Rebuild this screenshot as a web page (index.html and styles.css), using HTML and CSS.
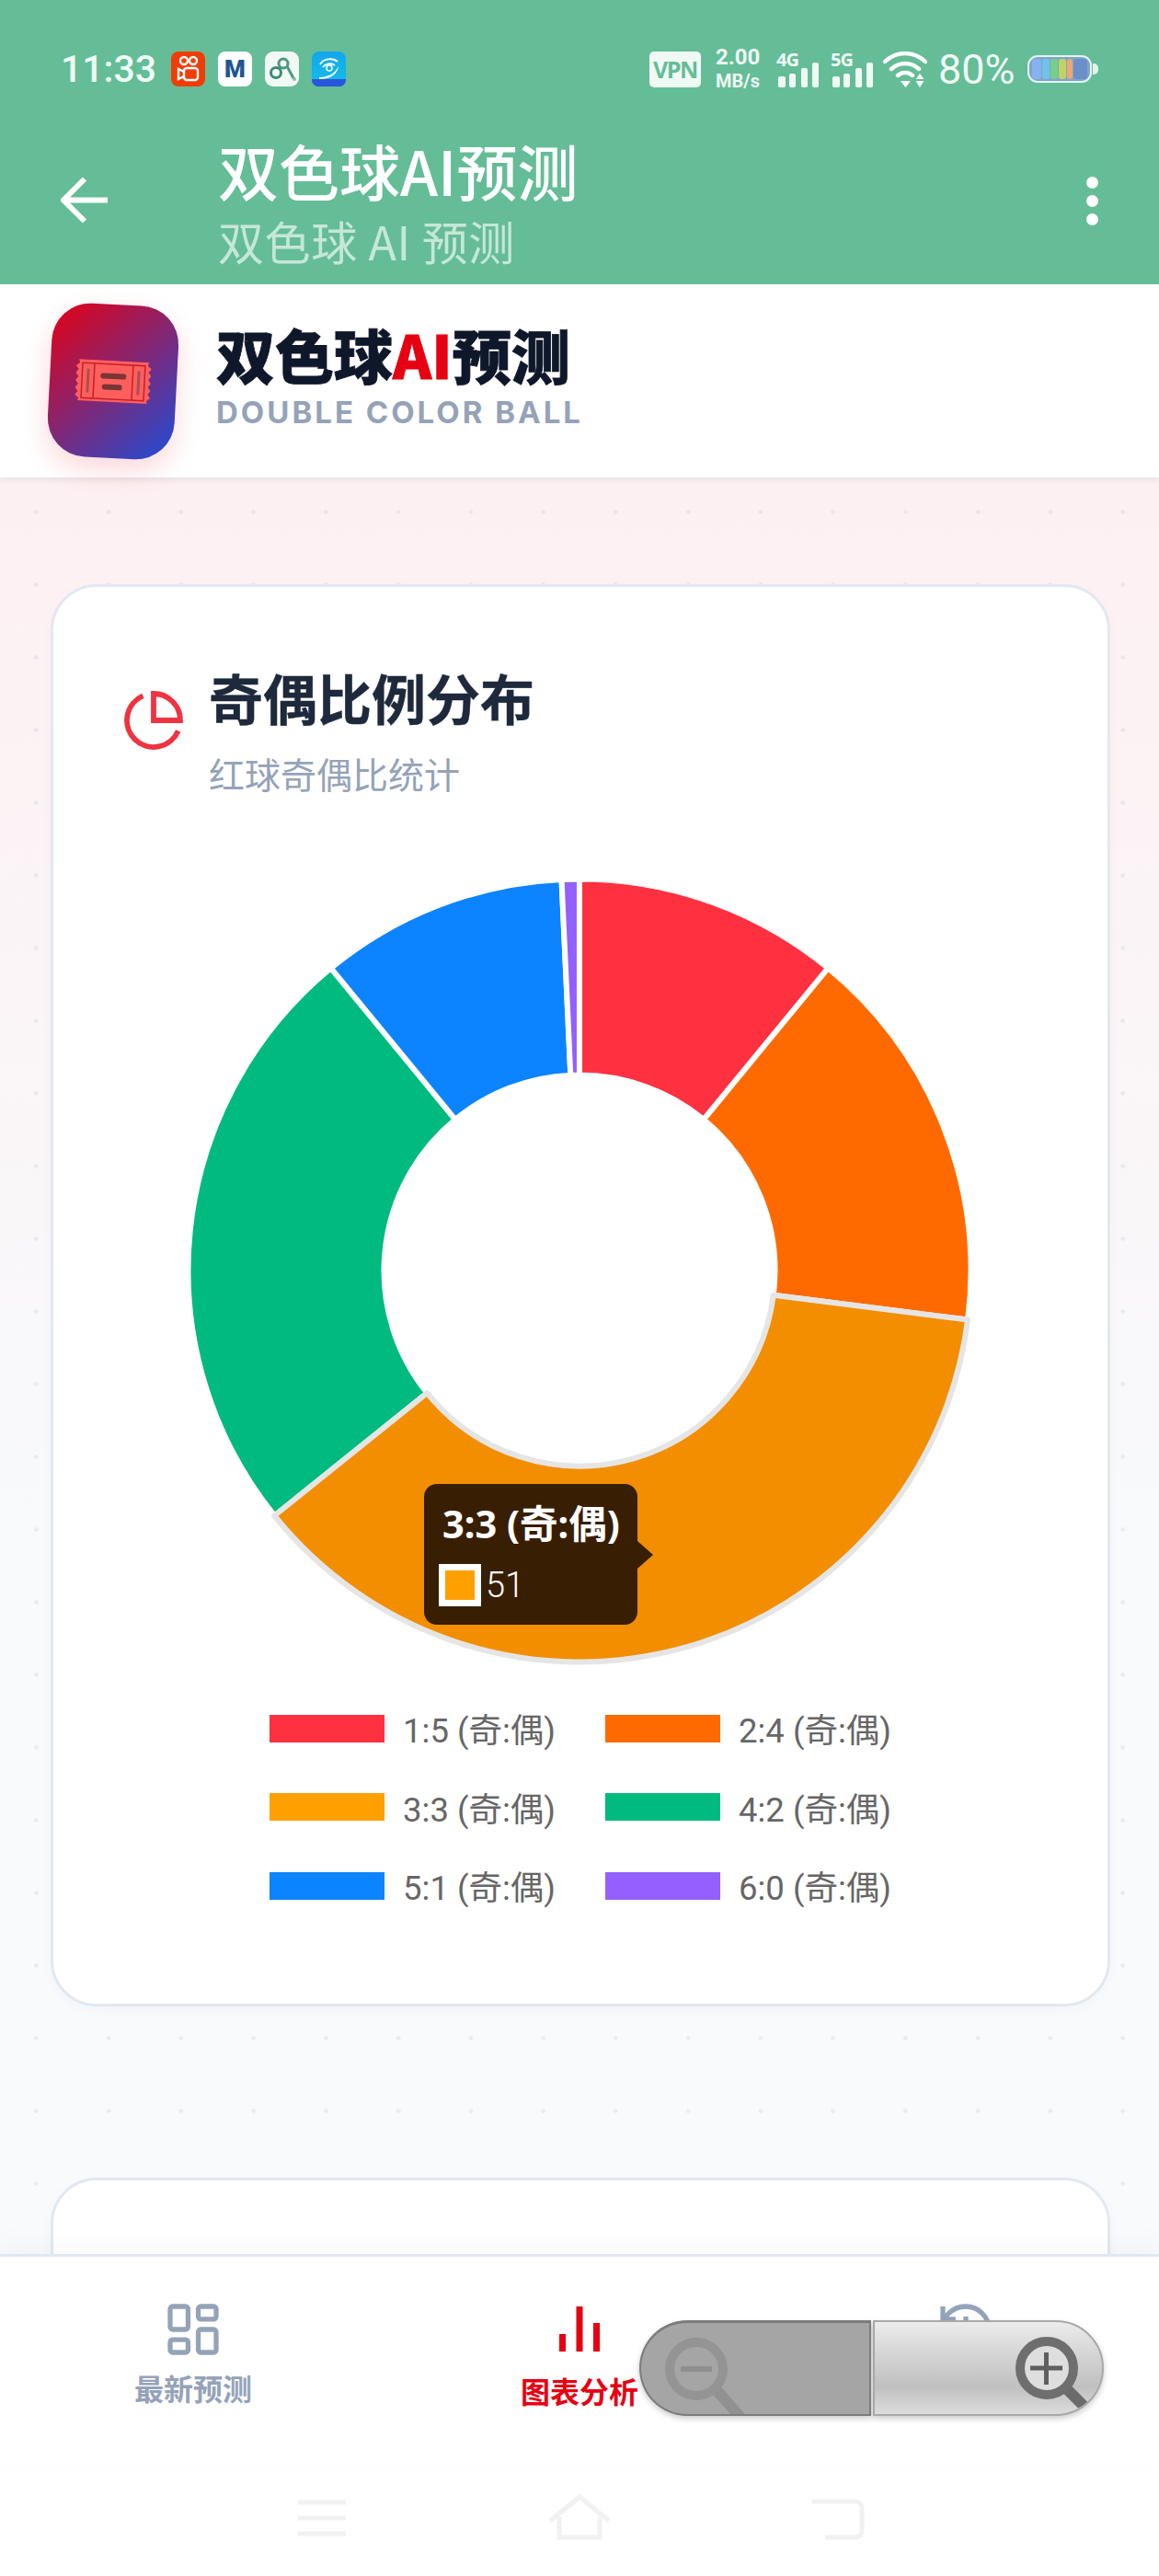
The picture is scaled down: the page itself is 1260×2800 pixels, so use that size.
FILE: index.html
```html
<!DOCTYPE html>
<html lang="zh-CN">
<head>
  <meta charset="UTF-8" />
  <meta name="viewport" content="width=device-width, initial-scale=1.0">
  <title>双色球AI预测</title>
  <link rel="stylesheet" href="styles.css">
</head>
<body>
  <div class="top-green">
    <div class="status-bar">
      <div class="status-left">
        <span class="clock">11:33</span>
        <svg class="app-icon" viewBox="0 0 37 38"><rect width="37" height="38" rx="8" fill="#f23c05"/><circle cx="14" cy="10" r="4" fill="none" stroke="#fff" stroke-width="2.4"/><circle cx="24" cy="10" r="4" fill="none" stroke="#fff" stroke-width="2.4"/><rect x="14" y="18" width="15" height="13" rx="3" fill="none" stroke="#fff" stroke-width="2.4"/><path d="M14 22l-6-3v11l6-3" fill="none" stroke="#fff" stroke-width="2.4"/></svg>
        <span class="app-tile"><span class="app-m">M</span></span>
        <svg class="app-icon" viewBox="0 0 37 38"><rect width="37" height="38" rx="9" fill="#f2f8f4"/><circle cx="20" cy="13" r="5" fill="none" stroke="#4c9a82" stroke-width="3"/><circle cx="12" cy="23" r="5.5" fill="none" stroke="#3f8a78" stroke-width="3"/><path d="M24 16l7 13" stroke="#4c9a82" stroke-width="3"/><circle cx="32" cy="30" r="2" fill="#8fb8a8"/></svg>
        <svg class="app-icon" viewBox="0 0 37 38"><defs><linearGradient id="blueApp" x1="0" y1="0" x2="0" y2="1"><stop offset="0" stop-color="#13a6ee"/><stop offset="1" stop-color="#12c0e6"/></linearGradient></defs><rect width="37" height="38" rx="8" fill="url(#blueApp)"/><path d="M0 30h37v1a7 7 0 0 1-7 7H7a7 7 0 0 1-7-7z" fill="#2a56dc"/><path d="M9 14c3-6 14-8 19-3M12 17c3-4 9-5 13-2" fill="none" stroke="#fff" stroke-width="2"/><path d="M8 28c7 0 16-2 21-12-1 8-8 14-21 14z" fill="#fff"/><circle cx="19" cy="18" r="3" fill="none" stroke="#fff" stroke-width="1.6"/></svg>
      </div>
      <div class="status-right">
        <span class="vpn">VPN</span>
        <span class="speed"><span>2.00</span><span>MB/s</span></span>
        <svg class="signal" viewBox="0 -8 46 47"><text x="0" y="16">4G</text><rect x="2" y="27" width="8" height="12" rx="2"/><rect x="14" y="24" width="7" height="15" rx="2"/><rect x="27" y="18" width="7" height="21" rx="2"/><rect x="39" y="12" width="7" height="27" rx="2"/></svg>
        <svg class="signal" viewBox="0 -8 46 47"><text x="0" y="16">5G</text><rect x="2" y="27" width="8" height="12" rx="2"/><rect x="14" y="24" width="7" height="15" rx="2"/><rect x="27" y="18" width="7" height="21" rx="2"/><rect x="39" y="12" width="7" height="27" rx="2"/></svg>
        <svg class="wifi" viewBox="0 0 48 39"><path d="M2 11c13-12 31-12 44 0M9 19c9-8 21-8 30 0M16 26c5-4 11-4 16 0" fill="none" stroke="#fff" stroke-width="4.4" stroke-linecap="round"/><path d="M19 32h11l-5.500 7zM40 24l4.500 6h-9zM35.500 32h9l-4.500 7z" fill="#fff"/></svg>
        <span class="battery-pct">80%</span>
        <span class="battery">
          <span class="cell cell-a"></span><span class="cell cell-b"></span><span class="cell cell-c"></span><span class="cell cell-d"></span><span class="cell cell-e"></span><span class="cell cell-f"></span>
        </span>
      </div>
    </div>
    <div class="app-bar">
      <svg class="back" viewBox="0 0 53 51"><path d="M51 25.500H5M26 2.500L3 25.500l23 23" fill="none" stroke="#fff" stroke-width="6"/></svg>
      <div class="app-titles">
        <div class="app-title">双色球AI预测</div>
        <div class="app-sub">双色球 AI 预测</div>
      </div>
      <div class="more"><span></span><span></span><span></span></div>
    </div>
  </div>

  <header class="brand">
    <div class="logo">
      <svg class="ticket" viewBox="0 0 82 46">
        <path d="M3 0H79L78 4l4 3-3 4 3 4-3 4 3 4-3 4 3 4-3 4 3 4-4 3 1 3H3l1-3-4-3 3-4-3-4 3-4-3-4 3-4-3-4 3-4-3-4 4-3z" fill="#ff5f5c"/>
        <rect x="7" y="4" width="68" height="38" fill="none" stroke="#c4202c" stroke-width="1.5"/>
        <path d="M20 4v38M62 4v38" stroke="#c4202c" stroke-width="1.5"/>
        <rect x="12" y="10" width="3" height="26" fill="#a85050"/>
        <rect x="67" y="10" width="3" height="26" fill="#a85050"/>
        <rect x="27" y="14" width="28" height="6" rx="3" fill="#7a3535"/>
        <rect x="29" y="26" width="22" height="6" rx="3" fill="#7a3535"/>
      </svg>
    </div>
    <div class="brand-text">
      <h1>双色球<span class="ai">AI</span>预测</h1>
      <div class="brand-en">DOUBLE COLOR BALL</div>
    </div>
  </header>

  <main class="content">
    <section class="card">
      <div class="card-head">
        <svg class="pie-icon" viewBox="2 2 20 20"><path d="M21.210 15.890A10 10 0 1 1 8 2.830"/><path d="M22 12A10 10 0 0 0 12 2v10z"/></svg>
        <div>
          <h2>奇偶比例分布</h2>
          <div class="card-sub">红球奇偶比统计</div>
        </div>
      </div>
      <div class="chart">
        <svg class="donut" viewBox="-440 -440 880 880">
          <path class="slice" fill="#ff3040" d="M0 -425.500A425.500 425.500 0 0 1 270.200 -328.700L135 -164.100A212.500 212.500 0 0 0 0 -212.500Z"/>
          <path class="slice" fill="#ff6a00" d="M270.200 -328.700A425.500 425.500 0 0 1 422.100 53.500L210.800 26.700A212.500 212.500 0 0 0 135 -164.100Z"/>
          <path class="slice" fill="#00ba7f" d="M-331.700 266.500A425.500 425.500 0 0 1 -270.200 -328.700L-135 -164.100A212.500 212.500 0 0 0 -165.700 133.100Z"/>
          <path class="slice" fill="#0d84ff" d="M-270.200 -328.700A425.500 425.500 0 0 1 -19.500 -425.100L-9.700 -212.300A212.500 212.500 0 0 0 -135 -164.100Z"/>
          <path class="slice" fill="#9360ff" d="M-19.500 -425.100A425.500 425.500 0 0 1 0 -425.500L0 -212.500A212.500 212.500 0 0 0 -9.700 -212.300Z"/>
          <path class="slice slice-on" fill="#f28e00" d="M422.100 53.500A425.500 425.500 0 0 1 -331.700 266.500L-165.700 133.100A212.500 212.500 0 0 0 210.800 26.700Z"/>
        </svg>
        <div class="tooltip">
          <div class="tooltip-title">3:3 (奇:偶)</div>
          <div class="tooltip-row"><span class="tooltip-swatch"></span><span>51</span></div>
        </div>
      </div>
      <div class="legend">
        <div class="legend-item"><span class="swatch c-red"></span>1:5 (奇:偶)</div>
        <div class="legend-item"><span class="swatch c-orange"></span>2:4 (奇:偶)</div>
        <div class="legend-item"><span class="swatch c-amber"></span>3:3 (奇:偶)</div>
        <div class="legend-item"><span class="swatch c-green"></span>4:2 (奇:偶)</div>
        <div class="legend-item"><span class="swatch c-blue"></span>5:1 (奇:偶)</div>
        <div class="legend-item"><span class="swatch c-purple"></span>6:0 (奇:偶)</div>
      </div>
    </section>
    <section class="card card-next"></section>
  </main>

  <nav class="tabs">
    <div class="tab">
      <svg class="tab-icon tab-line" viewBox="3 3 18 18"><rect x="3" y="3" width="7" height="9" rx="1"/><rect x="14" y="3" width="7" height="5" rx="1"/><rect x="14" y="12" width="7" height="9" rx="1"/><rect x="3" y="16" width="7" height="5" rx="1"/></svg>
      <span class="tab-label">最新预测</span>
    </div>
    <div class="tab tab-on">
      <svg class="tab-icon" viewBox="0 0 56 56"><rect x="6" y="33" width="7" height="19"/><rect x="24.500" y="3" width="7" height="49"/><rect x="43" y="21" width="7" height="31"/></svg>
      <span class="tab-label">图表分析</span>
    </div>
    <div class="tab">
      <svg class="tab-icon tab-line" viewBox="3 3 18 18"><path d="M3 12a9 9 0 1 0 9-9 9.750 9.750 0 0 0-6.740 2.740L3 8"/><path d="M3 3v5h5"/><path d="M12 7v5l4 2"/></svg>
    </div>
  </nav>

  <div class="sys-nav">
    <svg class="sys-icon" viewBox="0 0 52 40"><path d="M0 3h52M0 20h52M0 37h52"/></svg>
    <svg class="sys-icon sys-home" viewBox="0 0 68 46"><path d="M2 26L34 0l32 26M12 22v22h44V22"/></svg>
    <svg class="sys-icon sys-back" viewBox="0 0 56 46"><path d="M0 5h47a7 7 0 0 1 7 7v25a7 7 0 0 1-7 7H14"/></svg>
  </div>

  <div class="zoom-ctl">
    <div class="zoom-half zoom-out">
      <svg class="zoom-svg" viewBox="0 0 130 104"><path d="M82 76l30 34" stroke="#919191" stroke-width="12" fill="none"/><circle cx="60" cy="53" r="29" fill="none" stroke="#949494" stroke-width="10"/><path d="M43 53h34" stroke="#8f8f8f" stroke-width="6"/></svg>
    </div>
    <div class="zoom-half zoom-in">
      <svg class="zoom-svg" viewBox="0 0 130 104"><path d="M92 76l30 30" stroke="#6b6b6b" stroke-width="12" fill="none"/><circle cx="70" cy="53" r="29" fill="#dedede" stroke="#6e6e6e" stroke-width="10"/><path d="M52 53h35M69.500 36v35" stroke="#5f5f5f" stroke-width="5"/></svg>
    </div>
  </div>
</body>
</html>
```

FILE: styles.css
```css
html, body { margin: 0; height: 2800px; overflow: hidden; }
body { display: flex; flex-direction: column; position: relative; font-family: Roboto, "Noto Sans CJK SC", sans-serif; background: #fff; color: #1e293b; }

.top-green { flex: none; height: 309px; background: #64bd97; color: #fff; }
.status-bar { height: 150px; padding: 0 66px; display: flex; justify-content: space-between; align-items: center; }
.status-left { display: flex; align-items: center; gap: 14px; }
.clock { font-size: 41px; font-weight: 500; color: #f0faf5; width: 106px; }
.app-icon { width: 37px; height: 38px; display: block; }
.app-tile { width: 37px; height: 38px; border-radius: 8px; background: #fff; display: flex; align-items: center; justify-content: center; }
.app-m { font-size: 26px; font-weight: 900; color: #20568f; line-height: 1; }
.status-right { display: flex; align-items: center; }
.vpn { width: 56px; height: 39px; border-radius: 5px; background: #f0faf5; color: #64bd97; font-family: "Open Sans", sans-serif; font-size: 25px; font-weight: 700; line-height: 39px; text-align: center; letter-spacing: -1.500px; margin-right: 16px; }
.speed { display: flex; flex-direction: column; width: 50px; margin-right: 16px; font-family: Roboto, sans-serif; font-weight: 700; color: #f0faf5; }
.speed span:first-child { font-size: 24px; line-height: 26px; }
.speed span:last-child { font-size: 20px; line-height: 26px; white-space: nowrap; }
.signal { width: 46px; height: 47px; margin: -8px 13px 0 0; fill: #f0faf5; }
.signal text { font-family: "Open Sans", sans-serif; font-size: 20px; font-weight: 700; letter-spacing: -1px; }
.wifi { width: 48px; height: 39px; margin: 0 12px 0 -2px; }
.battery-pct { font-size: 45px; font-weight: 400; color: #f0faf5; margin-right: 12px; width: 85px; white-space: nowrap; }
.battery { position: relative; width: 70px; height: 30px; box-sizing: border-box; border: 2px solid #e3f4ec; border-radius: 11px; display: flex; padding: 2px 3px; gap: 1px; margin-right: 7px; background: #7ea5c9; }
.battery::after { content: ""; position: absolute; right: -9px; top: 7px; width: 6px; height: 12px; border-radius: 0 5px 5px 0; background: #e3f4ec; }
.cell { display: block; flex: 1; border-radius: 3px; }
.cell-a { background: #86b3f0; flex: 1.3; }
.cell-b { background: #6fc3ea; }
.cell-c { background: #76cf86; }
.cell-d { background: #bfd465; }
.cell-e { background: #f0a76f; flex: .8; }
.cell-f { background: #6b8fc8; flex: 1.9; }

.app-bar { height: 159px; padding: 0 66px 22px; box-sizing: border-box; display: flex; align-items: center; }
.back { width: 53px; height: 51px; margin-right: 118px; margin-bottom: 3px; }
.app-titles { flex: 1; }
.app-title { font-size: 66px; line-height: 72px; font-weight: 500; color: #fff; font-family: "Noto Sans CJK SC", sans-serif; }
.app-sub { font-size: 50px; line-height: 58px; margin-top: 12px; letter-spacing: .6px; color: #c6e7d7; font-family: "Noto Sans CJK SC", sans-serif; font-weight: 400; }
.more { display: flex; flex-direction: column; gap: 7px; margin-bottom: 1px; }
.more span { display: block; width: 13px; height: 13px; border-radius: 50%; background: #fff; }

.brand { flex: none; height: 210px; padding-left: 54px; box-sizing: border-box; display: flex; align-items: center; gap: 43px; background: #fff; box-shadow: 0 3px 6px rgba(148, 163, 184, .2); position: relative; z-index: 1; }
.logo { flex: none; width: 138px; height: 167px; border-radius: 42px; background: linear-gradient(135deg, #e60012 0%, #1d4ed8 100%); transform: rotate(3deg); box-shadow: 0 12px 30px rgba(230, 0, 18, .16); display: flex; align-items: center; justify-content: center; }
.ticket { width: 82px; height: 46px; }
.brand-text { margin-bottom: 13px; }
.brand h1 { margin: 0; font-size: 64px; line-height: 74px; font-weight: 900; color: #0f172a; font-family: "Noto Sans CJK SC", sans-serif; -webkit-text-stroke: .8px #0f172a; }
.ai { color: #e60012; -webkit-text-stroke: .8px #e60012; }
.brand-en { margin-top: 7px; font-family: Inter, sans-serif; font-size: 33px; line-height: 40px; font-weight: 700; letter-spacing: 3px; color: #94a3b8; white-space: nowrap; }

.content { flex: 1; min-height: 0; overflow: hidden; padding: 116px 53px 0 55px; background-color: #f8fafc; background-image: radial-gradient(circle, rgba(148, 163, 184, .16) 2px, transparent 2.500px), linear-gradient(180deg, #fdf0f2 0, #fbf5f7 30%, #f8fafc 60%); background-size: 78.750px 79px, 100% 100%; background-position: 0 -2px, 0 0; }
.card { box-sizing: border-box; height: 1546px; border: 3px solid #e2e8f0; border-radius: 50px; background: #fff; padding: 85px 0 0 79px; box-shadow: 0 4px 12px rgba(148, 163, 184, .06); }
.card-next { height: 500px; margin-top: 186px; padding: 0; }
.card-head { display: flex; gap: 31px; align-items: flex-start; }
.pie-icon { width: 58px; height: 58px; margin: 31px 0 0 1px; fill: none; stroke: #ef3340; stroke-width: 2; overflow: visible; flex: none; }
.card-head h2 { margin: 0; font-size: 59px; line-height: 70px; font-weight: 700; color: #1e293b; font-family: "Noto Sans CJK SC", sans-serif; -webkit-text-stroke: .4px #1e293b; }
.card-sub { margin-top: 22px; font-size: 39px; line-height: 50px; color: #94a3b8; font-family: "Noto Sans CJK SC", sans-serif; }

.chart { position: relative; width: 880px; height: 880px; margin: 76px 0 0 52.500px; }
.donut { display: block; width: 880px; height: 880px; }
.slice { stroke: #fff; stroke-width: 6; stroke-linejoin: round; }
.slice-on { stroke: #e5e5e5; }
.tooltip { position: absolute; left: 271.500px; top: 671.500px; width: 232px; height: 153px; box-sizing: border-box; padding: 16px 0 0 16px; border-radius: 14px; background: #381e02; color: #fff; font-family: "Noto Sans", "Noto Sans CJK SC", sans-serif; }
.tooltip::after { content: ""; position: absolute; right: -17px; top: 62px; border-left: 17px solid #381e02; border-top: 15px solid transparent; border-bottom: 15px solid transparent; }
.tooltip-title { margin-left: 4px; font-size: 41.500px; line-height: 54px; font-weight: 700; white-space: nowrap; }
.tooltip-row { display: flex; align-items: center; gap: 5px; margin-top: 17px; font-size: 38px; line-height: 46px; font-family: Roboto, sans-serif; font-weight: 300; }
.tooltip-swatch { width: 46px; height: 46px; box-sizing: border-box; border: 7px solid #fff; background: #ff9f00; }

.legend { width: 760px; margin: 42.500px 0 0 114px; display: flex; flex-wrap: wrap; justify-content: center; gap: 55.500px 54px; }
.legend-item { display: flex; align-items: center; gap: 20px; height: 30px; font-size: 36.500px; font-family: Roboto, "Noto Sans CJK SC", sans-serif; font-weight: 400; color: #666; white-space: nowrap; }
.swatch { width: 125px; height: 30px; flex: none; }
.c-red { background: #ff3040; }
.c-orange { background: #ff6a00; }
.c-amber { background: #ff9f00; }
.c-green { background: #00ba7f; }
.c-blue { background: #0d84ff; }
.c-purple { background: #9360ff; }

.tabs { flex: none; height: 230px; box-sizing: border-box; border-top: 3px solid #e2e8f0; background: #fff; display: flex; padding-top: 51px; box-shadow: 0 -8px 24px rgba(148, 163, 184, .08); position: relative; }
.tab { flex: 1; display: flex; flex-direction: column; align-items: center; gap: 15px; }
.tab-icon { width: 56px; height: 56px; overflow: visible; flex: none; }
.tab-line { width: 50px; height: 50px; margin: 3px; fill: none; stroke: #94a3b8; stroke-width: 1.900; }
.tab-label { font-size: 32px; line-height: 40px; font-weight: 700; color: #94a3b8; font-family: "Noto Sans CJK SC", sans-serif; }
.tab-on .tab-icon { fill: #e60012; }
.tab-on .tab-label { color: #e60012; margin-top: 3px; }

.sys-nav { flex: none; height: 120px; display: flex; align-items: center; padding: 0 321px 0 324px; justify-content: space-between; background: #fff; }
.sys-icon { width: 52px; height: 40px; fill: none; stroke: #f1f1f1; stroke-width: 5; overflow: visible; margin-top: -6px; }
.sys-home { width: 68px; height: 46px; }
.sys-back { width: 56px; height: 46px; }

.zoom-ctl { position: absolute; left: 695px; top: 2522px; width: 505px; height: 104px; display: flex; gap: 2px; filter: drop-shadow(0 3px 3px rgba(0, 0, 0, .2)); }
.zoom-half { flex: 1; box-sizing: border-box; overflow: hidden; display: flex; border: 2px solid #8a8a8a; }
.zoom-out { border-radius: 52px 0 0 52px; background: #a5a5a5; border-top-width: 3px; border-color: #7c7c7c; justify-content: flex-start; }
.zoom-in { border-radius: 0 52px 52px 0; background: linear-gradient(180deg, #ececec 0, #d8d8d8 30%, #c0c0c0 70%, #dcdcdc 100%); border-color: #a8a8a8; justify-content: flex-end; }
.zoom-svg { width: 130px; height: 104px; flex: none; margin-top: -3px; }
```
